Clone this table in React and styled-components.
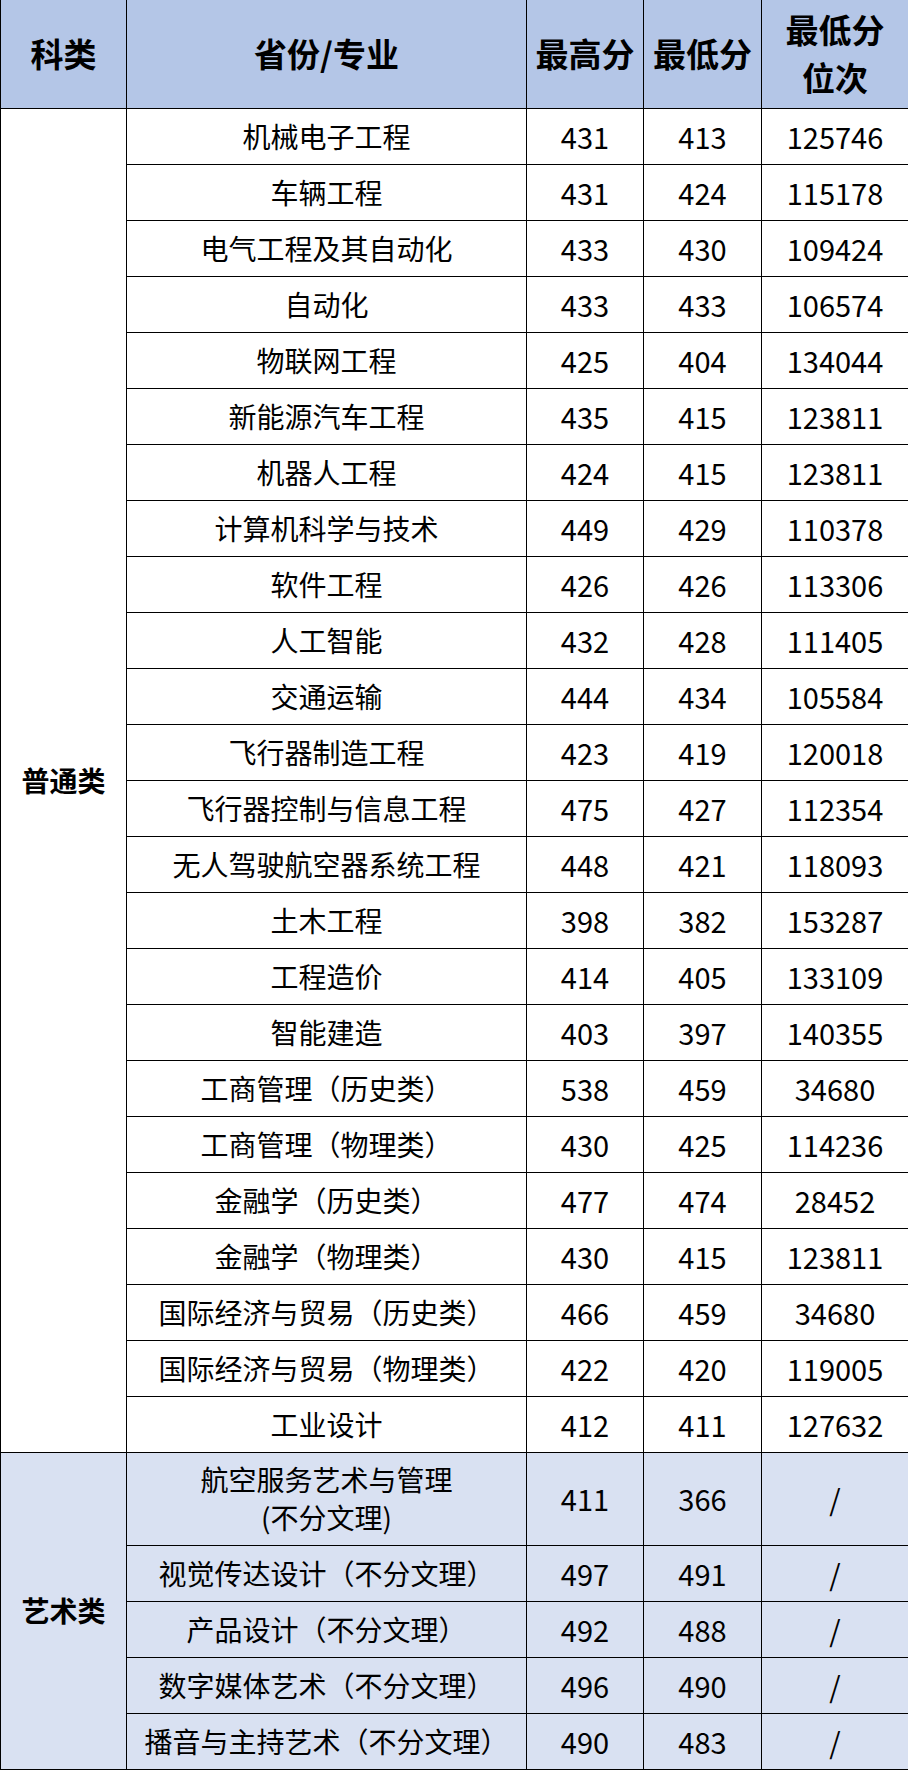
import React from 'react'
import styled, { createGlobalStyle } from 'styled-components'

const GlobalStyle = createGlobalStyle`
  html, body {
    margin: 0;
    padding: 0;
    background: #ffffff;
  }
  body {
    font-family: "Noto Sans CJK SC", "Microsoft YaHei", sans-serif;
  }
`

const Table = styled.table`
  width: 908px;
  table-layout: fixed;
  border-collapse: collapse;
  color: #000;
  font-size: 28px;
  line-height: 1.35;
`

const HeadCell = styled.th`
  height: 108px;
  padding: 0;
  background: #b4c6e7;
  border: 1px solid #000;
  border-top: none;
  font-size: 33px;
  font-weight: 700;
  line-height: 1.45;
  text-align: center;
  vertical-align: middle;
`

const Row = styled.tr`
  height: ${p => (p.$tall ? 93 : 56)}px;
  background: ${p => (p.$art ? '#d9e1f2' : '#ffffff')};
`

const Cell = styled.td`
  padding: 0;
  border: 1px solid #000;
  text-align: center;
  vertical-align: middle;
  white-space: nowrap;
`

const NumCell = styled(Cell)`
  font-size: 29px;
`

const CategoryCell = styled(Cell)`
  font-weight: 700;
  font-size: 28px;
`

const general = [
  ['机械电子工程', 431, 413, 125746],
  ['车辆工程', 431, 424, 115178],
  ['电气工程及其自动化', 433, 430, 109424],
  ['自动化', 433, 433, 106574],
  ['物联网工程', 425, 404, 134044],
  ['新能源汽车工程', 435, 415, 123811],
  ['机器人工程', 424, 415, 123811],
  ['计算机科学与技术', 449, 429, 110378],
  ['软件工程', 426, 426, 113306],
  ['人工智能', 432, 428, 111405],
  ['交通运输', 444, 434, 105584],
  ['飞行器制造工程', 423, 419, 120018],
  ['飞行器控制与信息工程', 475, 427, 112354],
  ['无人驾驶航空器系统工程', 448, 421, 118093],
  ['土木工程', 398, 382, 153287],
  ['工程造价', 414, 405, 133109],
  ['智能建造', 403, 397, 140355],
  ['工商管理（历史类）', 538, 459, 34680],
  ['工商管理（物理类）', 430, 425, 114236],
  ['金融学（历史类）', 477, 474, 28452],
  ['金融学（物理类）', 430, 415, 123811],
  ['国际经济与贸易（历史类）', 466, 459, 34680],
  ['国际经济与贸易（物理类）', 422, 420, 119005],
  ['工业设计', 412, 411, 127632],
]

const art = [
  [['航空服务艺术与管理', '(不分文理)'], 411, 366],
  ['视觉传达设计（不分文理）', 497, 491],
  ['产品设计（不分文理）', 492, 488],
  ['数字媒体艺术（不分文理）', 496, 490],
  ['播音与主持艺术（不分文理）', 490, 483],
]

export default function App() {
  return (
    <>
      <GlobalStyle />
      <Table>
        <colgroup>
          <col style={{ width: 126 }} />
          <col style={{ width: 400 }} />
          <col style={{ width: 117 }} />
          <col style={{ width: 118 }} />
          <col style={{ width: 147 }} />
        </colgroup>
        <thead>
          <tr>
            <HeadCell>科类</HeadCell>
            <HeadCell>省份/专业</HeadCell>
            <HeadCell>最高分</HeadCell>
            <HeadCell>最低分</HeadCell>
            <HeadCell>最低分<br />位次</HeadCell>
          </tr>
        </thead>
        <tbody>
          {general.map((r, i) => (
            <Row key={r[0]}>
              {i === 0 && <CategoryCell rowSpan={general.length}>普通类</CategoryCell>}
              <Cell>{r[0]}</Cell>
              <NumCell>{r[1]}</NumCell>
              <NumCell>{r[2]}</NumCell>
              <NumCell>{r[3]}</NumCell>
            </Row>
          ))}
          {art.map((r, i) => (
            <Row key={i} $art $tall={Array.isArray(r[0])}>
              {i === 0 && <CategoryCell rowSpan={art.length}>艺术类</CategoryCell>}
              <Cell>{Array.isArray(r[0]) ? <>{r[0][0]}<br />{r[0][1]}</> : r[0]}</Cell>
              <NumCell>{r[1]}</NumCell>
              <NumCell>{r[2]}</NumCell>
              <NumCell>/</NumCell>
            </Row>
          ))}
        </tbody>
      </Table>
    </>
  )
}
